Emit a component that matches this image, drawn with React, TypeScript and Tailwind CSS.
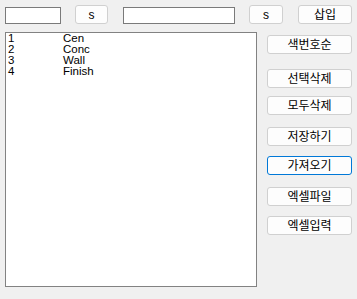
const items = [
  { no: "1", name: "Cen" },
  { no: "2", name: "Conc" },
  { no: "3", name: "Wall" },
  { no: "4", name: "Finish" },
];

const font = "font-['Liberation_Sans','Noto_Sans_CJK_KR',sans-serif]";

function Btn({ label, className = "", focused = false }: { label: string; className?: string; focused?: boolean }) {
  return (
    <button
      className={`${className} h-[19px] rounded-[3px] border ${
        focused ? "border-[#0078d7]" : "border-[#d0d0d0]"
      } bg-[#fdfdfd] text-[12px] leading-none text-black flex items-center justify-center ${font}`}
    >
      {label}
    </button>
  );
}

export default function App() {
  return (
    <div className={`w-[357px] h-[299px] bg-[#f0f0f0] pt-[5px] pl-[5px] ${font}`}>
      {/* Top row */}
      <div className="flex items-start h-[19px]">
        <input className="mt-[2px] w-[56px] h-[17px] border border-[#7a7a7a] bg-white outline-none" />
        <Btn label="s" className="ml-[14px] w-[33px]" />
        <input className="mt-[2px] ml-[15px] w-[112px] h-[17px] border border-[#7a7a7a] bg-white outline-none" />
        <Btn label="s" className="ml-[14px] w-[34px]" />
        <Btn label="삽입" className="ml-[15px] w-[54px]" />
      </div>

      {/* Body */}
      <div className="flex mt-[8px]">
        <div className="w-[252px] h-[255px] border border-[#828282] bg-white pl-[2px]">
          {items.map((it) => (
            <div key={it.no} className="flex text-[11.5px] leading-[11px] h-[11px] text-black">
              <span className="w-[55px]">{it.no}</span>
              <span>{it.name}</span>
            </div>
          ))}
        </div>

        <div className="ml-[10px] pt-[3px] flex flex-col w-[85px]">
          <Btn label="색번호순" className="w-[85px]" />
          <Btn label="선택삭제" className="w-[85px] mt-[15px]" />
          <Btn label="모두삭제" className="w-[85px] mt-[8px]" />
          <Btn label="저장하기" className="w-[85px] mt-[12px]" />
          <Btn label="가져오기" className="w-[85px] mt-[10px]" focused />
          <Btn label="엑셀파일" className="w-[85px] mt-[12px]" />
          <Btn label="엑셀입력" className="w-[85px] mt-[10px]" />
        </div>
      </div>
    </div>
  );
}
